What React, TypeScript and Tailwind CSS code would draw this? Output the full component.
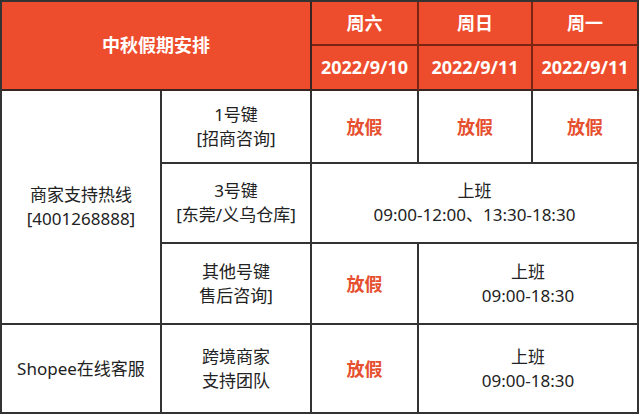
import React from "react";

const font = { fontFamily: '"Noto Sans", "Noto Sans CJK SC", sans-serif' };

// header cells: orange fill, dark red inner lines
const head = "flex items-center justify-center bg-[#ee4d2d] text-white font-bold text-[18px] border-r-2 border-[#7a2414]";
// body cells: white fill, dark grey lines
const cell = "flex flex-col items-center justify-center text-center bg-white text-[#222] text-[17px] leading-[24px] border-r-2 border-b-2 border-[#333]";
const off = "text-[#e6502f] font-bold text-[18px]";

export default function App() {
  return (
    <div className="w-[640px] h-[415px] bg-white" style={font}>
      <div className="grid grid-cols-[160px_150px_107px_114px_106px] grid-rows-[44px_45px_73px_80px_81px_89px] w-[639px] border-t-2 border-l-2 border-[#333]">
        {/* header */}
        <div className={`${head} col-start-1 col-end-3 row-start-1 row-end-3 border-b-2 border-b-[#3a2420] border-r-[#3a2420]`}>
          中秋假期安排
        </div>
        <div className={`${head} col-start-3 row-start-1 border-b-2`}>周六</div>
        <div className={`${head} col-start-4 row-start-1 border-b-2`}>周日</div>
        <div className={`${head} col-start-5 row-start-1 border-b-2 border-r-[#333]`}>周一</div>
        <div className={`${head} col-start-3 row-start-2 border-b-2 border-b-[#3a2420]`}>2022/9/10</div>
        <div className={`${head} col-start-4 row-start-2 border-b-2 border-b-[#3a2420]`}>2022/9/11</div>
        <div className={`${head} col-start-5 row-start-2 border-b-2 border-b-[#3a2420] border-r-[#333]`}>2022/9/11</div>

        {/* merchant hotline */}
        <div className={`${cell} col-start-1 row-start-3 row-end-6`}>
          <span>商家支持热线</span>
          <span>[4001268888]</span>
        </div>

        <div className={`${cell} col-start-2 row-start-3`}>
          <span>1号键</span>
          <span>[招商咨询]</span>
        </div>
        <div className={`${cell} col-start-3 row-start-3`}>
          <span className={off}>放假</span>
        </div>
        <div className={`${cell} col-start-4 row-start-3`}>
          <span className={off}>放假</span>
        </div>
        <div className={`${cell} col-start-5 row-start-3`}>
          <span className={off}>放假</span>
        </div>

        <div className={`${cell} col-start-2 row-start-4`}>
          <span>3号键</span>
          <span>[东莞/义乌仓库]</span>
        </div>
        <div className={`${cell} col-start-3 col-end-6 row-start-4`}>
          <span>上班</span>
          <span>09:00-12:00、13:30-18:30</span>
        </div>

        <div className={`${cell} col-start-2 row-start-5`}>
          <span>其他号键</span>
          <span>售后咨询]</span>
        </div>
        <div className={`${cell} col-start-3 row-start-5`}>
          <span className={off}>放假</span>
        </div>
        <div className={`${cell} col-start-4 col-end-6 row-start-5`}>
          <span>上班</span>
          <span>09:00-18:30</span>
        </div>

        {/* online service */}
        <div className={`${cell} col-start-1 row-start-6`}>
          <span>Shopee在线客服</span>
        </div>
        <div className={`${cell} col-start-2 row-start-6`}>
          <span>跨境商家</span>
          <span>支持团队</span>
        </div>
        <div className={`${cell} col-start-3 row-start-6`}>
          <span className={off}>放假</span>
        </div>
        <div className={`${cell} col-start-4 col-end-6 row-start-6`}>
          <span>上班</span>
          <span>09:00-18:30</span>
        </div>
      </div>
    </div>
  );
}
